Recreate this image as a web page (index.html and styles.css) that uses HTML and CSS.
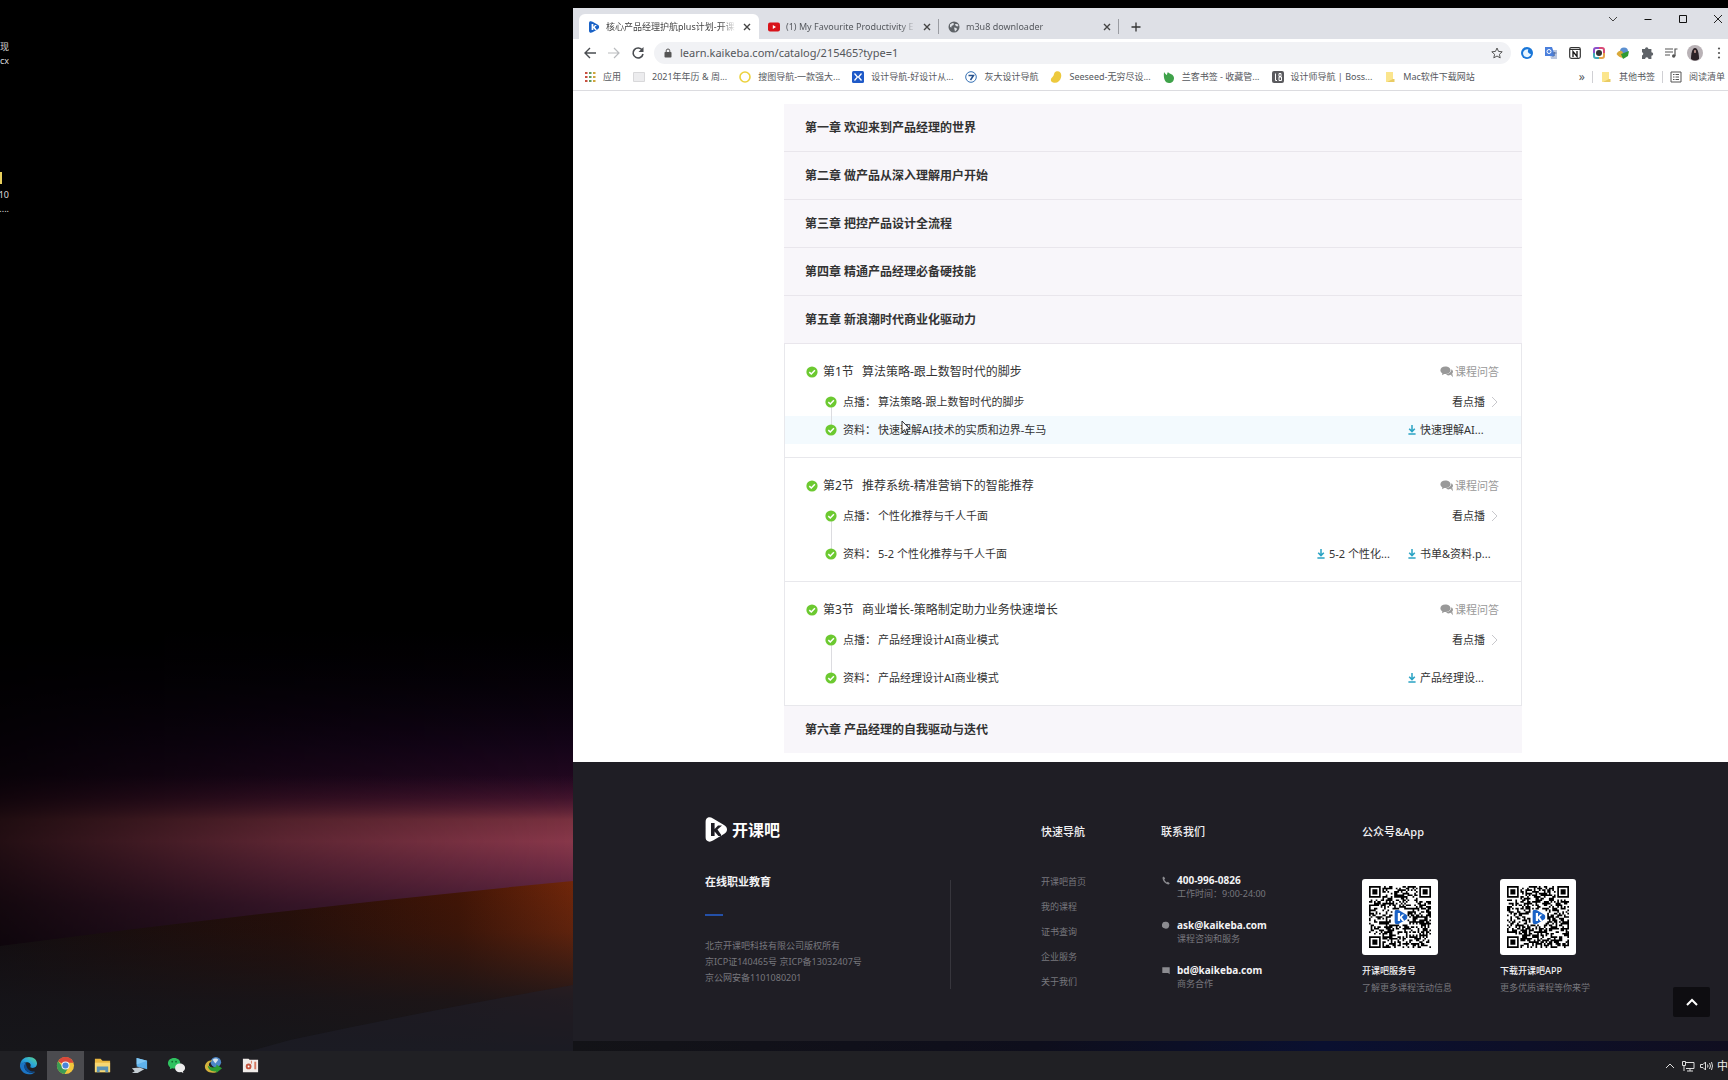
FILE: index.html
```html
<!DOCTYPE html>
<html lang="zh-CN">
<head>
<meta charset="utf-8">
<title>核心产品经理护航plus计划-开课吧</title>
<link rel="stylesheet" href="styles.css">
</head>
<body>
<svg class="defs" width="0" height="0" aria-hidden="true">
  <symbol id="check" viewBox="0 0 12 12"><circle cx="6" cy="6" r="5.6" fill="#6cc930"/><path d="M3.3 6.1 5.3 8l3.6-3.7" fill="none" stroke="#fff" stroke-width="1.5"/></symbol>
  <symbol id="chat" viewBox="0 0 14 12"><path d="M8.2 9.4c3 0 4.8-1.7 4.8-3.6 0-1-.6-2-1.5-2.600C11.300 6.200 9 8 6 8.300c.6.7 1.400 1.100 2.200 1.100z" fill="#999"/><path d="m10.500 8.500 2.500 2.800-.6-3.300zM5.300.6C2.500.6.400 2.200.4 4.300c0 1.300.8 2.400 2 3.100L2 9.200l2.200-1.300c3.500.5 6.300-1.200 6.300-3.600C10.500 2.200 8.200.6 5.300.6z" fill="#999"/></symbol>
  <symbol id="down" viewBox="0 0 8 10"><path d="M4 0v6M1.200 3.700 4 6.600l2.800-2.900M.4 9h7.200" fill="none" stroke="#2aa3c4" stroke-width="1.500"/></symbol>
  <symbol id="go" viewBox="0 0 7 12"><path d="m1 1 5 5-5 5" fill="none" stroke="#c8c8cc"/></symbol>
  <symbol id="close" viewBox="0 0 10 10"><path d="m2 2 6 6M8 2 2 8" fill="none" stroke="#444" stroke-width="1.400"/></symbol>
  <symbol id="kkb" viewBox="0 0 22 25"><path fill-rule="evenodd" d="M3 .6C4.500 0 6 .3 8 1.400L19 8c4 2.400 4 6.500 0 9L8 23.600c-2 1.100-3.500 1.300-5 .7C1.200 23.600.6 22 .6 20V5C.6 3 1.200 1.300 3 .6zM6 6v13h3.600v-4.500l3.800 4.500H17l-4.500-6.400L17 8.500h-4L9.600 12V6z"/></symbol>
  <symbol id="folder" viewBox="0 0 12 12"><path d="M2 1h7v10H2z" fill="#fbe58d"/><path d="M9 8h1.500v3H3z" fill="#e9cb63"/></symbol>
</svg>

<main class="desktop">
  <svg class="wallpaper" viewBox="0 0 1728 1080" preserveAspectRatio="none" aria-hidden="true">
    <defs>
      <linearGradient id="halo" x1="0" y1="0" x2="0" y2="1"><stop offset="0" stop-color="#05000c" stop-opacity="0"/><stop offset=".35" stop-color="#140418"/><stop offset=".52" stop-color="#2a0a24"/><stop offset="1" stop-color="#3a1230"/></linearGradient>
      <linearGradient id="beam" x1="0" y1="0" x2="0" y2="1"><stop offset="0" stop-color="#4a1432" stop-opacity="0"/><stop offset=".12" stop-color="#581c34" stop-opacity=".5"/><stop offset=".24" stop-color="#78303f"/><stop offset=".36" stop-color="#88374a"/><stop offset=".5" stop-color="#702c44"/><stop offset=".7" stop-color="#4c1e38"/><stop offset="1" stop-color="#30142c"/></linearGradient>
      <linearGradient id="shade" x1="0" y1="0" x2="1" y2="0"><stop offset="0" stop-color="#fff" stop-opacity=".26"/><stop offset=".5" stop-color="#fff" stop-opacity=".68"/><stop offset="1" stop-color="#fff"/></linearGradient>
      <mask id="fade" maskUnits="userSpaceOnUse" x="0" y="0" width="573" height="1080"><rect width="573" height="1080" fill="url(#shade)"/></mask>
      <linearGradient id="ground" x1="0" y1="0" x2="1" y2="0"><stop offset="0" stop-color="#110b0d"/><stop offset=".5" stop-color="#270e08"/><stop offset=".8" stop-color="#431505"/><stop offset="1" stop-color="#70260a"/></linearGradient>
      <linearGradient id="dusk" x1="0" y1="0" x2="0" y2="1"><stop offset="0" stop-color="#16151a" stop-opacity="0"/><stop offset=".3" stop-color="#16151a" stop-opacity=".2"/><stop offset=".7" stop-color="#16151a" stop-opacity=".85"/><stop offset="1" stop-color="#16161a"/></linearGradient>
      <linearGradient id="base" x1="0" y1="0" x2="1" y2="0"><stop offset="0" stop-color="#131317"/><stop offset=".4" stop-color="#0e0e1c"/><stop offset=".65" stop-color="#0a1030"/><stop offset="1" stop-color="#100e20"/></linearGradient>
    </defs>
    <g mask="url(#fade)">
      <path d="M0 630h573v330H0z" fill="url(#halo)"/>
      <path d="M0 775h573v185H0z" fill="url(#beam)"/>
    </g>
    <path d="M0 946Q290 908 573 881v170H0z" fill="url(#ground)"/>
    <path d="M0 946Q290 908 573 881v170H0z" fill="url(#dusk)"/>
    <path d="M290 1040Q430 1010 573 985v66H250z" fill="#20202c" opacity=".5"/>
    <path d="M573 1035h1155v45H573z" fill="url(#base)"/>
  </svg>

  <div class="shortcuts">
    <div class="shortcut"><span>现</span><span>cx</span></div>
    <div class="shortcut"><i class="shortcut-folder"></i><span>10</span><span>....</span></div>
  </div>

  <section class="window">
    <header class="tabstrip">
      <div class="tab tab-active">
        <svg class="icon12 blue" viewBox="0 0 22 25"><use href="#kkb"/></svg>
        <span class="tab-title">核心产品经理护航plus计划-开课</span>
        <button class="plain" aria-label="关闭"><svg class="icon10"><use href="#close"/></svg></button>
      </div>
      <div class="tab">
        <svg class="icon12" viewBox="0 0 12 12"><rect y="1.500" width="12" height="9" rx="2" fill="#d8131a"/><path d="m4.800 4 3.200 2-3.200 2z" fill="#fff"/></svg>
        <span class="tab-title">(1) My Favourite Productivity E</span>
        <button class="plain" aria-label="关闭"><svg class="icon10"><use href="#close"/></svg></button>
      </div>
      <div class="tab">
        <svg class="icon12" viewBox="0 0 12 12"><circle cx="6" cy="6" r="5.500" fill="#5f6368"/><path d="M2 3.500 4.500 2l1.500.5-.5 1.500-2 1v1.500L2 6zM7 3h2.500l1 2L9 5.500 7.500 4.500zM6 6.500l2.500.5.5 1.500L7 10.500z" fill="#dee1e6"/></svg>
        <span class="tab-title">m3u8 downloader</span>
        <button class="plain" aria-label="关闭"><svg class="icon10"><use href="#close"/></svg></button>
      </div>
      <button class="plain new-tab" aria-label="新标签页"><svg class="icon10" viewBox="0 0 10 10"><path d="M5 .5v9M.5 5h9" stroke="#333" stroke-width="1.300"/></svg></button>
      <div class="caption">
        <button class="plain" aria-label="标签搜索"><svg class="icon10" viewBox="0 0 10 10"><path d="m1 3 4 4 4-4" fill="none" stroke="#444"/></svg></button>
        <button class="plain" aria-label="最小化"><svg class="icon10" viewBox="0 0 10 10"><path d="M1.500 5.500h7" stroke="#111"/></svg></button>
        <button class="plain" aria-label="最大化"><svg class="icon10" viewBox="0 0 10 10"><path d="M1.500 1.500h7v7h-7z" fill="none" stroke="#111"/></svg></button>
        <button class="plain" aria-label="关闭窗口"><svg class="icon10" viewBox="0 0 10 10"><path d="m1 1 8 8M9 1 1 9" stroke="#222"/></svg></button>
      </div>
    </header>

    <div class="toolbar">
      <button class="plain" aria-label="后退"><svg class="icon16" viewBox="0 0 16 16"><path d="M14 8H3M8 3 3 8l5 5" fill="none" stroke="#4a4d51" stroke-width="1.400"/></svg></button>
      <button class="plain" aria-label="前进"><svg class="icon16" viewBox="0 0 16 16"><path d="M2 8h11M8 3l5 5-5 5" fill="none" stroke="#b9bbbe" stroke-width="1.200"/></svg></button>
      <button class="plain" aria-label="刷新"><svg class="icon16" viewBox="0 0 16 16"><path d="M12.300 5.200A5 5 0 1 0 13 9" fill="none" stroke="#4a4d51" stroke-width="1.600"/><path d="M13.500 2v5h-5z" fill="#4a4d51"/></svg></button>
      <div class="omnibox">
        <svg class="lock" viewBox="0 0 8 10"><rect x=".5" y="4" width="7" height="5.500" rx=".8" fill="#555"/><path d="M2.200 4V2.800a1.800 1.800 0 0 1 3.600 0V4" fill="none" stroke="#555"/></svg>
        <input type="text" value="learn.kaikeba.com/catalog/215465?type=1" aria-label="地址栏">
        <svg class="icon12" viewBox="0 0 12 12"><path d="m6 1 1.500 3.400 3.700.4-2.800 2.500.8 3.600L6 9l-3.200 1.900.8-3.600L.8 4.800l3.700-.4z" fill="none" stroke="#555"/></svg>
      </div>
      <div class="extensions">
        <svg class="icon16" viewBox="0 0 16 16"><circle cx="8" cy="8" r="6" fill="#1976d8"/><path d="M9.500 4.500A4 4 0 1 0 12 9a2.800 2.800 0 0 1-2.500-4.500z" fill="#e8f5ff"/></svg>
        <svg class="icon16" viewBox="0 0 16 16"><path d="M6 5h8v9H8z" fill="#b9c6df"/><path d="M2 2h7l3 9H2z" fill="#4a7fdc"/><circle cx="6" cy="6.500" r="2" fill="none" stroke="#fff"/><path d="M9.500 8h4M11.500 7v1c0 2-1 3-2 4" fill="none" stroke="#5b76a8"/></svg>
        <svg class="icon16" viewBox="0 0 16 16"><rect x="2.700" y="2.700" width="10.600" height="10.600" rx="1.500" fill="#fff" stroke="#333" stroke-width="1.200"/><path d="M3 4.500h10" stroke="#333"/><path d="M6 12V6.500l4 5V6" fill="none" stroke="#111" stroke-width="1.300"/></svg>
        <svg class="icon16" viewBox="0 0 16 16"><path d="M3 8V5a2 2 0 0 1 2-2h3" fill="none" stroke="#8d4fc9" stroke-width="2"/><path d="M8 3h3a2 2 0 0 1 2 2v3" fill="none" stroke="#d84a77" stroke-width="2"/><path d="M13 8v3a2 2 0 0 1-2 2H8" fill="none" stroke="#e4a34a" stroke-width="2"/><path d="M8 13H5a2 2 0 0 1-2-2V8" fill="none" stroke="#42a8b8" stroke-width="2"/><circle cx="8" cy="8" r="3" fill="#333"/></svg>
        <svg class="icon16" viewBox="0 0 16 16"><circle cx="9" cy="6.500" r="4" fill="#5b8fd0"/><path d="M1.500 9c2-4 5-4 6-2l3 5c-3 2-7 0-9-3z" fill="#d9a93a"/><path d="m14 6-1 5-5 3-2-5z" fill="#2f9a32"/></svg>
        <svg class="icon16" viewBox="0 0 16 16"><path d="M6 4a1.700 1.700 0 0 1 3.400 0h3v3.200a1.800 1.800 0 0 1 0 3.600V14H9.500a1.700 1.700 0 0 0-3.400 0H3v-3.500a1.700 1.700 0 0 0 0-3.300V4z" fill="#5f6368"/></svg>
        <svg class="icon16" viewBox="0 0 16 16"><path d="M2 4h8M2 7h8M2 10h5M12 11V4h2.500" fill="none" stroke="#555" stroke-width="1.200"/><circle cx="10.700" cy="11" r="1.700" fill="#555"/></svg>
        <svg class="icon16" viewBox="0 0 16 16"><circle cx="8" cy="8" r="8" fill="#b9b2b6"/><path d="M4 14c0-5 1-11 4-11s4 6 4 11q-4 3-8 0z" fill="#2c2226"/><path d="M7 5.500q1-1 2 0l-.3 2.500h-1.400z" fill="#c39a92"/></svg>
        <svg class="icon16" viewBox="0 0 16 16"><g fill="#555"><circle cx="8" cy="3.500" r="1.100"/><circle cx="8" cy="8" r="1.100"/><circle cx="8" cy="12.500" r="1.100"/></g></svg>
      </div>
    </div>

    <nav class="bookmarks">
      <a href="#"><svg class="icon12" viewBox="0 0 12 12"><path d="M1 2h2.500M1 6h2.500M1 10h2.500" stroke="#c8503f" stroke-width="2"/><path d="M5 2h2.500M5 6h2.500M5 10h2.500" stroke="#5f9c5f" stroke-width="2"/><path d="M9 2h2.500M9 6h2.500M9 10h2.500" stroke="#d0a53c" stroke-width="2"/></svg>应用</a>
      <a href="#"><svg class="icon12" viewBox="0 0 12 12"><path d="M.5 1.500h11v9H.5z" fill="#ececee" stroke="#d8d8da"/></svg>2021年年历 &amp; 周...</a>
      <a href="#"><svg class="icon12" viewBox="0 0 12 12"><circle cx="6" cy="6" r="5" fill="none" stroke="#ecd23e" stroke-width="1.600"/></svg>搜图导航-一款强大...</a>
      <a href="#"><svg class="icon12" viewBox="0 0 12 12"><rect width="12" height="12" rx="1.500" fill="#1f5ac8"/><path d="M2.500 2.500 5.500 6l-3 3.500M9.500 2.500 6.500 6l3 3.500" fill="none" stroke="#fff" stroke-width="1.300"/></svg>设计导航-好设计从...</a>
      <a href="#"><svg class="icon12" viewBox="0 0 12 12"><circle cx="6" cy="6" r="5.300" fill="#fff" stroke="#3470b4"/><path d="M3.500 4.500h5L5.500 9" fill="none" stroke="#24508c" stroke-width="1.500"/></svg>灰大设计导航</a>
      <a href="#"><svg class="icon12" viewBox="0 0 12 12"><path d="M6 .5c4-1 6 2 5 6-1 4-4 6-8 5-3-1-2.500-4-.5-5.500S3.500 1.500 6 .5z" fill="#edc93d"/></svg>Seeseed-无穷尽设...</a>
      <a href="#"><svg class="icon12" viewBox="0 0 12 12"><path d="M1 1c2 3 3 3 3 3s0-2 1-3c1 2 6 2 6 6 0 3-2 5-5 5S0 9 1 1z" fill="#3fa24a"/></svg>兰客书签 - 收藏管...</a>
      <a href="#"><svg class="icon12" viewBox="0 0 12 12"><rect width="12" height="12" rx="2" fill="#5a5a5e"/><path d="M3.500 2.500v7H5M7 2.500h2v3H7zm0 3.500h2.500v3.500H7z" fill="none" stroke="#fff"/></svg>设计师导航 | Boss...</a>
      <a href="#"><svg class="icon12"><use href="#folder"/></svg>Mac软件下载网站</a>
      <button class="plain more" aria-label="更多书签">»</button>
      <a href="#" class="sep"><svg class="icon12"><use href="#folder"/></svg>其他书签</a>
      <a href="#" class="sep"><svg class="icon12" viewBox="0 0 12 12"><path d="M1 1h10v10H1z" fill="none" stroke="#555"/><path d="M3 3.500h1.500M3 6h1.500M3 8.500h1.500M5.500 3.500H9M5.500 6H9M5.500 8.500H9" stroke="#555"/></svg>阅读清单</a>
    </nav>

    <div class="catalog-wrap">
      <div class="catalog">
        <h2><button>第一章 欢迎来到产品经理的世界</button></h2>
        <h2><button>第二章 做产品从深入理解用户开始</button></h2>
        <h2><button>第三章 把控产品设计全流程</button></h2>
        <h2><button>第四章 精通产品经理必备硬技能</button></h2>
        <h2><button>第五章 新浪潮时代商业化驱动力</button></h2>

        <article class="lesson">
          <div class="lesson-head"><svg class="icon12"><use href="#check"/></svg><h3><span>第1节</span>算法策略-跟上数智时代的脚步</h3><a class="qa" href="#"><svg><use href="#chat"/></svg>课程问答</a></div>
          <ul>
            <li><svg class="icon12"><use href="#check"/></svg><span class="kind">点播：</span>算法策略-跟上数智时代的脚步<a class="watch" href="#">看点播<svg><use href="#go"/></svg></a></li>
            <li class="hover"><svg class="icon12"><use href="#check"/></svg><span class="kind">资料：</span>快速理解AI技术的实质和边界-车马<span class="files"><a href="#"><svg><use href="#down"/></svg>快速理解AI...</a></span>
              <svg class="cursor" viewBox="0 0 10 15"><path d="M1 1v11l2.500-2.300L5.300 14l1.700-.8-1.800-4H9z" fill="#fff" stroke="#333"/></svg></li>
          </ul>
        </article>
        <article class="lesson spaced">
          <div class="lesson-head"><svg class="icon12"><use href="#check"/></svg><h3><span>第2节</span>推荐系统-精准营销下的智能推荐</h3><a class="qa" href="#"><svg><use href="#chat"/></svg>课程问答</a></div>
          <ul>
            <li><svg class="icon12"><use href="#check"/></svg><span class="kind">点播：</span>个性化推荐与千人千面<a class="watch" href="#">看点播<svg><use href="#go"/></svg></a></li>
            <li><svg class="icon12"><use href="#check"/></svg><span class="kind">资料：</span>5-2 个性化推荐与千人千面<span class="files"><a href="#"><svg><use href="#down"/></svg>5-2 个性化...</a><a href="#"><svg><use href="#down"/></svg>书单&amp;资料.p...</a></span></li>
          </ul>
        </article>
        <article class="lesson spaced">
          <div class="lesson-head"><svg class="icon12"><use href="#check"/></svg><h3><span>第3节</span>商业增长-策略制定助力业务快速增长</h3><a class="qa" href="#"><svg><use href="#chat"/></svg>课程问答</a></div>
          <ul>
            <li><svg class="icon12"><use href="#check"/></svg><span class="kind">点播：</span>产品经理设计AI商业模式<a class="watch" href="#">看点播<svg><use href="#go"/></svg></a></li>
            <li><svg class="icon12"><use href="#check"/></svg><span class="kind">资料：</span>产品经理设计AI商业模式<span class="files"><a href="#"><svg><use href="#down"/></svg>产品经理设...</a></span></li>
          </ul>
        </article>
        <h2><button>第六章 产品经理的自我驱动与迭代</button></h2>
      </div>
    </div>

    <footer class="site-footer">
      <div class="footer-grid">
        <div class="about">
          <div class="logo"><svg viewBox="0 0 22 25"><use href="#kkb"/></svg>开课吧</div>
          <div class="about-body">
            <strong>在线职业教育</strong>
            <hr>
            <p>北京开课吧科技有限公司版权所有<br>京ICP证140465号 京ICP备13032407号<br>京公网安备1101080201</p>
          </div>
        </div>
        <nav class="quick">
          <h4>快速导航</h4>
          <a href="#">开课吧首页</a><a href="#">我的课程</a><a href="#">证书查询</a><a href="#">企业服务</a><a href="#">关于我们</a>
        </nav>
        <div class="contact">
          <h4>联系我们</h4>
          <dl>
            <dt><svg viewBox="0 0 8 9"><path d="M1.800.5.500 1.500C.5 5 3.500 8.300 6.800 8.500l1-1.300-2-1.500-1 .8C3.500 5.700 2.700 4.600 2.300 3.500l.9-1z" fill="#8b8b90"/></svg>400-996-0826</dt><dd>工作时间：9:00-24:00</dd>
            <dt><svg viewBox="0 0 8 9"><path d="M4 .8a3.700 3.400 0 1 1-1 6.800L4 8.500 3 7.600A3.600 3.400 0 0 1 4 .8z" fill="#8b8b90"/></svg>ask@kaikeba.com</dt><dd>课程咨询和服务</dd>
            <dt><svg viewBox="0 0 8 9"><path d="M.3 1.200h7.400v7L6 7H.3z" fill="#8b8b90"/></svg>bd@kaikeba.com</dt><dd>商务合作</dd>
          </dl>
        </div>
        <div class="apps">
          <h4>公众号&amp;App</h4>
          <div class="codes">
            <figure><div class="qr" data-seed="7"></div><figcaption><b>开课吧服务号</b>了解更多课程活动信息</figcaption></figure>
            <figure><div class="qr" data-seed="23"></div><figcaption><b>下载开课吧APP</b>更多优质课程等你来学</figcaption></figure>
          </div>
        </div>
      </div>
      <button class="to-top" aria-label="回到顶部"><svg viewBox="0 0 12 8"><path d="m1 7 5-5 5 5" fill="none" stroke="#fff" stroke-width="2"/></svg></button>
    </footer>
  </section>
</main>

<nav class="taskbar">
  <button aria-label="Edge"><svg viewBox="0 0 20 20"><defs><linearGradient id="edge" x1="0" y1="1" x2="1" y2="0"><stop stop-color="#0c59a4"/><stop offset=".5" stop-color="#2aa5dd"/><stop offset="1" stop-color="#5cd88a"/></linearGradient></defs><path d="M1 11C1 4.500 5 1 10.500 1 16 1 19 4.500 19 8c0 3-2 4.500-4.500 4.500-2 0-3-.5-2.500-1.500 1-2-.5-4.500-3.500-4.500C5 6.500 2.500 8 1 11z" fill="url(#edge)"/><path d="M1 10c1.500-2.500 4-3.500 6.500-3C5 9 5 14 9 16.500c2.500 1.500 5.500 1.500 8 0C15 19 12.500 19.500 10 19.200 5 19 1 15 1 10z" fill="#1b74c4"/><path d="M7.500 7C4.500 9 5.500 15 9.500 16.800c2.500 1 5.500.7 7.500-.5-6 .8-10-4-9.500-9.300z" fill="#0b4a90"/></svg></button>
  <button class="running" aria-label="Chrome"><svg viewBox="0 0 20 20"><circle cx="10" cy="10" r="9" fill="#f3c63c"/><path d="M10 10 2.200 5.500A9 9 0 0 1 18.500 7H10z" fill="#d9483b"/><path d="M2.200 5.500A9 9 0 0 0 9 19l4.500-7.500-6 .5z" fill="#3c9c55"/><circle cx="10" cy="10" r="4.200" fill="#f2f2f2"/><circle cx="10" cy="10" r="3.200" fill="#4a84d8"/></svg></button>
  <button aria-label="文件资源管理器"><svg viewBox="0 0 20 20"><path d="M2 3h6l2 2h8v12H2z" fill="#e9b63f"/><path d="M2 7h16v10H2z" fill="#f7d774"/><path d="M4 11h12v6h-3v-2H7v2H4z" fill="#5a91b5"/></svg></button>
  <button aria-label="远程桌面"><svg viewBox="0 0 20 20"><path d="m7 2 11 3v9L7 11z" fill="#5eb2ec"/><path d="m7 2 11 3-11 4z" fill="#82c8f5"/><path d="m2 13 8-1 5 2-7 4H2l3-2z" fill="#c4ccd2"/></svg></button>
  <button aria-label="微信"><svg viewBox="0 0 20 20"><path d="M7.500 2C3.500 2 1 4.500 1 7.500c0 1.800 1 3.300 2.300 4.300L3 14l2.500-1.200c4.500 1 8.500-1.300 8.500-5.300C14 4.500 11.500 2 7.500 2z" fill="#2fc260"/><path d="M13.500 8C10.500 8 8.500 10 8.500 12.500s2 4.500 5 4.500l1.500-.2 2.200 1.200-.4-2c1.300-.8 2.200-2 2.200-3.500C19 10 16.500 8 13.500 8z" fill="#ececec"/><g fill="#14692f"><circle cx="5.500" cy="6" r=".9"/><circle cx="9.500" cy="6" r=".9"/></g></svg></button>
  <button aria-label="下载管理器"><svg viewBox="0 0 20 20"><circle cx="12.500" cy="6.500" r="5.500" fill="#4d86c6"/><path d="M9 4c2-2 5-2 6 0l-3 4z" fill="#d8e4ec"/><path d="M1 10c1-4 5-6 8-5-3 1-5 4-3 6 3 3 8 2 8 2l-1 4C7 19 0 16 1 10z" fill="#d4b23c"/><path d="M4 10c2 2 5 3 9 1V9l6 4-6 5v-2c-5 1-9-2-9-6z" fill="#2b9c33"/></svg></button>
  <button aria-label="录屏"><svg viewBox="0 0 20 20"><path d="M2 3h6l1 1h9v13H2z" fill="#f1ece9"/><circle cx="8" cy="11" r="3" fill="#c4543c"/><circle cx="8" cy="11" r="1" fill="#fff"/><path d="M14 6h2v8h-2z" fill="#d77a62"/><path d="M11 5v3" stroke="#d77a62"/></svg></button>
  <div class="tray">
    <svg viewBox="0 0 14 14"><path d="m3 9 4-4 4 4" fill="none" stroke="#ddd"/></svg>
    <svg viewBox="0 0 14 14"><path d="M4 3.500h9v6H5M9 9.500V12M6 12h6M1.500 2.500h3v4h-3zM3 6.500V12" fill="none" stroke="#ddd"/></svg>
    <svg viewBox="0 0 14 14"><path d="M1.500 5.500H4L6.500 3v8L4 8.500H1.500zM8.500 5.500q1 1.500 0 3M10.500 4q2 3 0 6M12.500 3q2 4 0 8" fill="none" stroke="#ddd"/></svg>
    <span>中</span>
  </div>
</nav>
<script src="qr.js"></script>
</body>
</html>
```
FILE: styles.css
```css
* { box-sizing: border-box; }
body {
  margin: 0;
  min-height: 100vh;
  display: flex;
  flex-direction: column;
  overflow-x: hidden;
  background: #000;
  color: #333;
  font: 11px/16px "Noto Sans", "Noto Sans CJK SC", sans-serif;
}
a { color: inherit; text-decoration: none; }
h2, h3, h4, ul, p, dl, dd, figure { margin: 0; padding: 0; }
svg { flex: none; display: block; }
button { font: inherit; color: inherit; border: 0; cursor: pointer; }
.plain { display: flex; padding: 0; background: none; }
.defs { position: absolute; }
.icon10 { width: 10px; height: 10px; }
.icon12 { width: 12px; height: 12px; }
.icon16 { width: 16px; height: 16px; }
.blue { fill: #1a62c6; }

/* desktop */
.desktop {
  position: relative;
  flex: 1;
  display: flex;
  align-items: flex-start;
  padding: 8px 0 10px;
}
.wallpaper { position: absolute; inset: 0; width: 100%; height: 100vh; }
.shortcuts {
  position: relative;
  flex: 1;
  padding-top: 32px;
  color: #ddd;
  font-size: 9px;
  line-height: 14px;
}
.shortcut {
  width: 9px;
  display: flex;
  flex-direction: column;
  align-items: flex-end;
  overflow: hidden;
  margin-bottom: 98px;
}
.shortcut-folder { width: 9px; height: 12px; margin: 6px 0 4px; border-left: 2px solid #e8cf5c; }

/* browser window */
.window { position: relative; width: 66.84%; background: #fff; }
.tabstrip {
  display: flex;
  align-items: center;
  height: 31px;
  padding: 6px 5px 0 6px;
  background: #dee0e6;
}
.tab {
  flex: 0 1 180px;
  min-width: 0;
  height: 25px;
  display: flex;
  align-items: center;
  gap: 6px;
  padding: 0 7px 0 9px;
  font-size: 9px;
  color: #55585d;
  background: linear-gradient(#9a9ca2, #9a9ca2) right center / 1px 15px no-repeat;
}
.tab-active { background: #fff; border-radius: 6px 6px 0 0; color: #444; }
.tab-title {
  flex: 1;
  min-width: 0;
  overflow: hidden;
  white-space: nowrap;
  -webkit-mask-image: linear-gradient(90deg, #000 88%, transparent);
  mask-image: linear-gradient(90deg, #000 88%, transparent);
}
.new-tab { margin-left: 12px; }
.caption { display: flex; gap: 25px; margin-left: auto; align-self: flex-start; }
.toolbar {
  display: flex;
  align-items: center;
  gap: 8px;
  height: 27px;
  padding: 0 1px 0 9px;
}
.omnibox {
  flex: 1;
  display: flex;
  align-items: center;
  gap: 8px;
  height: 22px;
  padding: 0 8px 0 10px;
  border-radius: 11px;
  background: #f1f2f5;
}
.lock { width: 8px; height: 10px; }
.omnibox input {
  flex: 1;
  min-width: 0;
  border: 0;
  padding: 0;
  background: none;
  color: #54565a;
  font: 11px/16px "Noto Sans", sans-serif;
}
.extensions { display: flex; gap: 8px; }
.bookmarks {
  display: flex;
  align-items: center;
  gap: 12px;
  height: 25px;
  padding: 0 3px 2px 11px;
  border-bottom: 1px solid #dcdce0;
  font-size: 9px;
  color: #55585d;
  white-space: nowrap;
}
.bookmarks a { display: flex; align-items: center; gap: 7px; }
.more { margin-left: auto; font-size: 12px; }
.bookmarks .sep { border-left: 1px solid #d0d0d4; padding-left: 7px; margin-left: -5px; line-height: 12px; }

/* course catalogue */
.catalog-wrap { padding: 13px 0 9px 5px; }
.catalog { max-width: 738px; margin: 0 auto; }
.catalog h2 { border-bottom: 1px solid #e9e6ec; font-size: 12px; line-height: 16px; }
.catalog h2:last-child { border-bottom: 0; }
.catalog h2 button {
  display: block;
  width: 100%;
  padding: 16px 21px 15px;
  background: #f8f6fa;
  text-align: left;
  font-weight: 700;
  color: #333;
}
.lesson {
  padding: 14px 0 13px;
  border: 1px solid #e8e8ec;
  border-top: 0;
}
.lesson-head {
  display: flex;
  align-items: center;
  height: 27px;
  margin-bottom: 3px;
  padding: 0 22px 0 21px;
}
.lesson h3 { display: flex; gap: 8px; margin-left: 5px; font-size: 12px; font-weight: 400; }
.qa { display: flex; align-items: center; gap: 1px; margin-left: auto; color: #999; }
.qa svg { width: 14px; height: 12px; }
.lesson ul { display: grid; list-style: none; }
.spaced ul { row-gap: 10px; }
.lesson li {
  position: relative;
  display: flex;
  align-items: center;
  height: 28px;
  padding: 0 22px 0 40px;
}
.lesson li > .icon12 { position: relative; z-index: 1; }
.lesson li:first-child::before {
  content: "";
  position: absolute;
  left: 46px;
  top: 14px;
  width: 1px;
  height: 28px;
  background: #dcdce0;
  z-index: 1;
}
.spaced li:first-child::before { height: 38px; }
.kind { width: 35px; margin-left: 6px; white-space: nowrap; }
.hover { background: #f3fafe; }
.watch { display: flex; align-items: center; gap: 6px; margin-left: auto; padding-right: 1px; }
.watch svg { width: 7px; height: 12px; }
.files { display: grid; grid-auto-flow: column; grid-auto-columns: 91px; margin-left: auto; }
.files a { display: flex; align-items: center; gap: 4px; white-space: nowrap; }
.files svg { width: 8px; height: 10px; }
.lesson .cursor { position: absolute; left: 116px; top: 4px; width: 10px; height: 15px; }

/* footer */
.site-footer {
  position: relative;
  padding: 55px 130px 45px;
  background: #1f1e25;
  color: #77777d;
  font-size: 9px;
}
.footer-grid {
  display: grid;
  grid-template-columns: minmax(0, 336fr) minmax(0, 120fr) minmax(0, 201fr) minmax(0, 236fr);
  padding-left: 2px;
}
h4, .about strong { color: #f2f2f4; font-size: 11px; line-height: 16px; }
h4 { margin-top: 7px; font-weight: 500; }
.logo {
  display: flex;
  align-items: center;
  gap: 5px;
  height: 25px;
  color: #fff;
  fill: #fff;
  font-size: 16px;
  font-weight: 700;
}
.logo svg { width: 22px; height: 25px; }
.about-body {
  display: flow-root;
  width: 246px;
  height: 109px;
  margin-top: 38px;
  border-right: 1px solid #37363d;
}
.about strong { display: block; margin-top: -6px; }
.about hr { width: 18px; height: 2px; margin: 24px 0 22px; border: 0; background: #2450a8; }
.about p { line-height: 16px; }
.quick { display: flex; flex-direction: column; gap: 9px; }
.quick h4 { margin-bottom: 25px; }
.contact dl { display: grid; margin-top: 32px; }
.contact dt {
  display: flex;
  align-items: center;
  gap: 7px;
  padding-left: 1px;
  font-size: 10px;
  line-height: 16px;
  font-weight: 700;
  color: #f2f2f4;
}
.contact dt svg { width: 8px; height: 9px; }
.contact dd { padding-left: 16px; margin-bottom: 17px; line-height: 12px; }
.contact dd:last-child { margin-bottom: 0; }
.codes { display: flex; gap: 39px; margin-top: 39px; }
.codes figure { flex: none; width: 99px; white-space: nowrap; }
.qr {
  width: 76px;
  height: 76px;
  padding: 7px;
  border-radius: 3px;
  background: #fff;
}
.qr > svg { width: 62px; height: 62px; }
.qr-logo { fill: #1a62c6; }
figcaption { display: grid; margin-top: 7px; line-height: 17px; }
figcaption b { font-weight: 500; color: #f2f2f4; }
.to-top {
  position: absolute;
  right: 18px;
  bottom: 24px;
  width: 37px;
  height: 30px;
  display: flex;
  align-items: center;
  justify-content: center;
  border-radius: 2px;
  background: #0e0d11;
}
.to-top svg { width: 12px; height: 8px; }

/* taskbar */
.taskbar {
  position: relative;
  display: flex;
  height: 29px;
  padding-left: 10px;
  background: #202024;
}
.taskbar button {
  display: flex;
  align-items: center;
  justify-content: center;
  width: 37px;
  padding: 0;
  background: none;
}
.taskbar .running { background: #4b4b4f; }
.taskbar button svg { width: 19px; height: 19px; }
.tray { display: flex; align-items: center; gap: 4px; margin-left: auto; color: #eee; }
.tray svg { width: 14px; height: 14px; }
```
FILE: qr.js
```js
// Fills each .qr box with a 37-module code: three finder squares, data dots and the logo in the middle.
document.querySelectorAll(".qr").forEach((box) => {
  const n = 37;
  let seed = Number(box.dataset.seed);
  const random = () => (seed = (seed * 16807) % 2147483647) / 2147483647;
  for (let i = 0; i < 10; i++) random();
  const inFinder = (x, y) => (x < 8 && y < 8) || (x > n - 9 && y < 8) || (x < 8 && y > n - 9);
  let d = "";
  for (let y = 0; y < n; y++) {
    for (let x = 0; x < n; x++) {
      const centre = Math.abs(x - 18) < 5 && Math.abs(y - 18) < 5;
      if (random() < 0.52 && !inFinder(x, y) && !centre) d += `M${x} ${y}h1v1h-1z`;
    }
  }
  for (const [x, y] of [[0, 0], [n - 7, 0], [0, n - 7]]) {
    d += `M${x} ${y}h7v7h-7zM${x + 1} ${y + 1}v5h5v-5zM${x + 2} ${y + 2}h3v3h-3z`;
  }
  box.innerHTML = `<svg viewBox="0 0 ${n} ${n}" aria-hidden="true"><path d="${d}"/><svg class="qr-logo" x="15" y="14" width="8" height="9" viewBox="0 0 22 25"><use href="#kkb"/></svg></svg>`;
});
```
